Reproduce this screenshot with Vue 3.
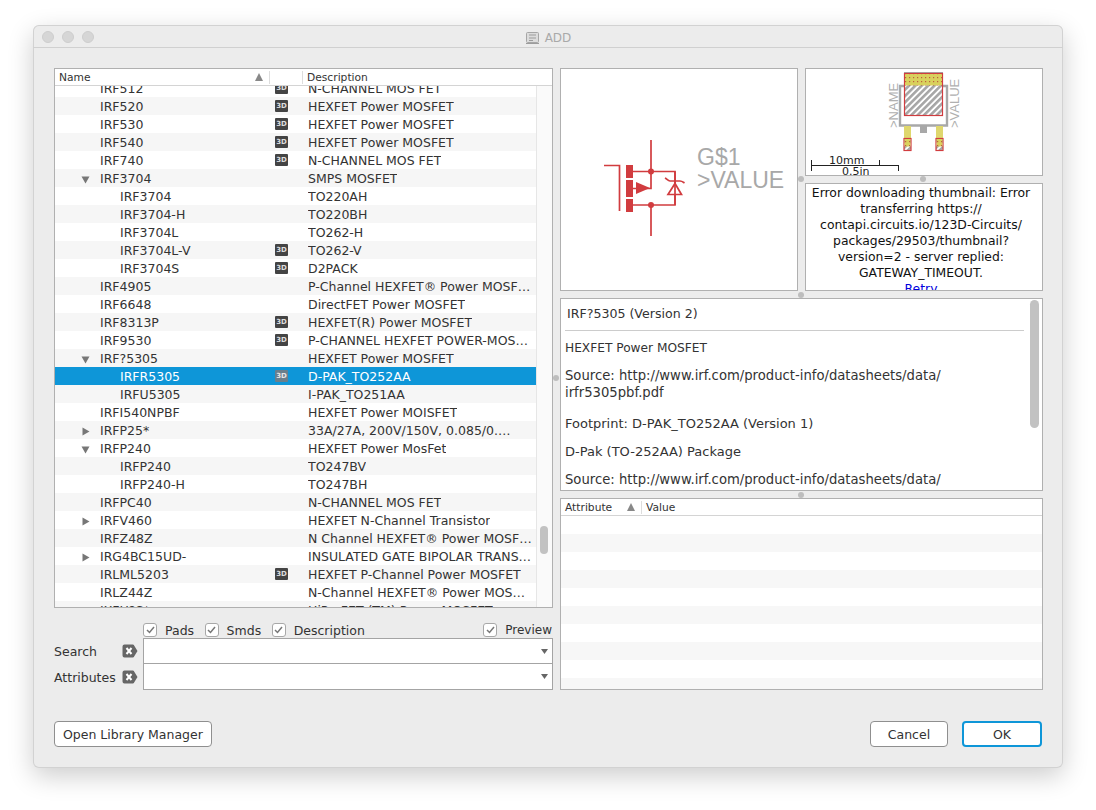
<template>
  <div class="page">
    <div class="window">
      <div class="titlebar">
        <div class="lights"><i></i><i></i><i></i></div>
        <div class="title">
          <svg width="15" height="15" viewBox="0 0 15 15"><rect x="1.500" y="2.500" width="12" height="10" rx="1" fill="#dcdcdc" stroke="#a6a6a6"/><path d="M1 13.500h13M4 5h7M4 8h7M4 10.500h4" stroke="#9c9c9c" fill="none"/></svg>
          <span>ADD</span>
        </div>
      </div>
      <div class="body">
        <div class="main">
          <div class="left">
            <div class="tree panel">
              <div class="thead">
                <div class="th th-name"><span>Name</span><em class="sort"></em></div>
                <div class="th th-3d"></div>
                <div class="th th-desc">Description</div>
              </div>
              <div class="tbody">
                <div class="rows">
                  <div v-for="(r, i) in rows" :key="i" class="row" :class="{ alt: i % 2 === 1, sel: r.sel }">
                    <div class="c-name" :class="'lv' + r.lv">
                      <svg v-if="r.arrow === 'down'" class="arrow" width="9" height="9" viewBox="0 0 9 9"><path d="M0.500 1.500h8l-4 7z" fill="#777"/></svg>
                      <svg v-if="r.arrow === 'right'" class="arrow" width="9" height="9" viewBox="0 0 9 9"><path d="M1.500 0.500v8l7-4z" fill="#777"/></svg>
                      <span>{{ r.n }}</span>
                    </div>
                    <div class="c-3d"><b v-if="r.d3" class="badge">3D</b></div>
                    <div class="c-desc">{{ r.d }}</div>
                  </div>
                </div>
                <div class="vbar"><div class="thumb"></div></div>
              </div>
            </div>
            <div class="checks">
              <label v-for="c in checks" :key="c" class="chk" :class="{ push: c === 'Preview' }"><i class="box"><svg width="9" height="8" viewBox="0 0 9 8"><path d="M1 4l2.500 2.500L8 1" fill="none" stroke="#777" stroke-width="1.500"/></svg></i>{{ c }}</label>
            </div>
            <div class="field" v-for="f in ['Search', 'Attributes']" :key="f">
              <span class="flabel">{{ f }}</span>
              <svg class="clear" width="16" height="14" viewBox="0 0 16 14"><path d="M2.500 0.500h8.500a1 1 0 0 1 .8.400l3.700 6.100-3.700 6.100a1 1 0 0 1-.8.400H2.500a2 2 0 0 1-2-2V2.500a2 2 0 0 1 2-2z" fill="#666"/><path d="M4.500 4l5 6M9.500 4l-5 6" stroke="#fff" stroke-width="2"/></svg>
              <div class="combo"><svg width="7" height="5" viewBox="0 0 7 5"><path d="M0 0h7L3.500 5z" fill="#666"/></svg></div>
            </div>
          </div>
          <div class="right">
            <div class="previews">
              <div class="panel symbol">
                <svg class="sym" width="90" height="105" viewBox="600 135 90 105">
                  <g fill="none" stroke="#d13c3f" stroke-width="1.700">
                    <path d="M604 165.500h15.500V211"/>
                    <path d="M651 140v48.500H633"/>
                    <path d="M651 205v31"/>
                    <path d="M633 171.500h42v33.500h-42"/>
                    <path d="M675 171.500v12.500M675 194v11"/>
                    <path d="M668 194.500h13.500L675 183.500z"/>
                    <path d="M665 178c2 1 3 3 5 3h10c2 0 3 1 4.500 2"/>
                  </g>
                  <g fill="#d13c3f">
                    <rect x="626" y="165" width="7" height="13"/>
                    <rect x="626" y="180" width="7" height="17"/>
                    <rect x="626" y="199" width="7" height="13"/>
                    <path d="M636 182l14 6-14 6z"/>
                    <circle cx="651" cy="171.500" r="3"/>
                    <circle cx="651" cy="205" r="3"/>
                  </g>
                </svg>
                <div class="symtext"><div>G$1</div><div>&gt;VALUE</div></div>
              </div>
              <div class="preview-col">
                <div class="panel package">
                  <svg width="236" height="106" viewBox="806 69 236 106">
                    <defs>
                      <pattern id="hatch" width="4.500" height="4.500" patternUnits="userSpaceOnUse" patternTransform="rotate(45)">
                        <rect width="4.500" height="4.500" fill="#fff"/><rect width="2.600" height="4.500" fill="#a6a6a6"/>
                      </pattern>
                      <pattern id="dots" width="4" height="4" patternUnits="userSpaceOnUse">
                        <rect width="4" height="4" fill="#d9d15d"/><rect x="1" y="1" width="1.200" height="1.200" fill="#c0603b"/>
                      </pattern>
                    </defs>
                    <path d="M904 86h-4v39.500h47V86h-4" fill="none" stroke="#a8a8a8" stroke-width="2.400"/>
                    <rect x="920" y="126" width="7" height="7" fill="#a8a8a8"/>
                    <rect x="904" y="126" width="7" height="12" fill="#dfd76d"/>
                    <rect x="936" y="126" width="7" height="12" fill="#dfd76d"/>
                    <rect x="904" y="72" width="39" height="1.500" fill="#a8a8a8"/>
                    <rect x="904.500" y="73.500" width="38" height="42" fill="url(#hatch)" stroke="#d13c3f" stroke-width="1.200"/>
                    <rect x="905" y="74" width="37" height="11.500" fill="url(#dots)"/>
                    <g v-for="x in [904, 936]" :key="x">
                      <rect :x="x" y="138.500" width="7" height="12" fill="url(#hatch)" stroke="#d13c3f" stroke-width="1.200"/>
                      <rect :x="x + 0.6" y="139" width="5.800" height="7.500" fill="url(#dots)"/>
                    </g>
                    <text class="pk-txt" transform="translate(898 128) rotate(-90)">&gt;NAME</text>
                    <text class="pk-txt" transform="translate(959 128) rotate(-90)">&gt;VALUE</text>
                    <path d="M811.500 160v11M811 165.500h88M879.500 160v5M898.500 165v6" fill="none" stroke="#222" stroke-width="1"/>
                    <text class="scale" x="829" y="164">10mm</text>
                    <text class="scale" x="842" y="175">0.5in</text>
                  </svg>
                </div>
                <div class="panel error">
                  <div>Error downloading thumbnail: Error transferring https://<br>contapi.circuits.io/123D-Circuits/<br>packages/29503/thumbnail?<br>version=2 - server replied:<br>GATEWAY_TIMEOUT.</div>
                  <a>Retry</a>
                </div>
              </div>
            </div>
            <div class="panel info">
              <div class="info-text">
                <p class="h">IRF?5305 (Version 2)</p>
                <hr>
                <p class="caps">HEXFET Power MOSFET</p>
                <p class="src gap">Source: http://www.irf.com/product-info/datasheets/data/<br>irfr5305pbf.pdf</p>
                <p>Footprint: D-PAK_TO252AA (Version 1)</p>
                <p>D-Pak (TO-252AA) Package</p>
                <p class="src">Source: http://www.irf.com/product-info/datasheets/data/<br>irfr5305pbf.pdf</p>
              </div>
              <div class="ibar"></div>
            </div>
            <div class="panel attrs">
              <div class="thead thead-a">
                <div class="th a-name"><span>Attribute</span><em class="sort"></em></div>
                <div class="th a-val">Value</div>
              </div>
              <div class="a-rows"><div v-for="n in 10" :key="n" class="a-row" :class="{ alt: n % 2 === 0 }"></div></div>
            </div>
          </div>
          <i class="handle h1"></i><i class="handle h2"></i><i class="handle h3"></i><i class="handle h4"></i><i class="handle h5"></i>
        </div>
        <div class="footer">
          <button class="btn">Open Library Manager</button>
          <div class="spacer"></div>
          <button class="btn cancel">Cancel</button>
          <button class="btn ok">OK</button>
        </div>
      </div>
    </div>
  </div>
</template>

<script setup>
const s = 'HEXFET Power MOSFET'
const n = 'N-CHANNEL MOS FET'
const checks = ['Pads', 'Smds', 'Description', 'Preview']
const rows = [
  { n: 'IRF512', lv: 1, d3: 1, d: n },
  { n: 'IRF520', lv: 1, d3: 1, d: s },
  { n: 'IRF530', lv: 1, d3: 1, d: s },
  { n: 'IRF540', lv: 1, d3: 1, d: s },
  { n: 'IRF740', lv: 1, d3: 1, d: n },
  { n: 'IRF3704', lv: 1, arrow: 'down', d: 'SMPS MOSFET' },
  { n: 'IRF3704', lv: 2, d: 'TO220AH' },
  { n: 'IRF3704-H', lv: 2, d: 'TO220BH' },
  { n: 'IRF3704L', lv: 2, d: 'TO262-H' },
  { n: 'IRF3704L-V', lv: 2, d3: 1, d: 'TO262-V' },
  { n: 'IRF3704S', lv: 2, d3: 1, d: 'D2PACK' },
  { n: 'IRF4905', lv: 1, d: 'P-Channel HEXFET® Power MOSF…' },
  { n: 'IRF6648', lv: 1, d: 'DirectFET Power MOSFET' },
  { n: 'IRF8313P', lv: 1, d3: 1, d: 'HEXFET(R) Power MOSFET' },
  { n: 'IRF9530', lv: 1, d3: 1, d: 'P-CHANNEL HEXFET POWER-MOS…' },
  { n: 'IRF?5305', lv: 1, arrow: 'down', d: s },
  { n: 'IRFR5305', lv: 2, d3: 1, d: 'D-PAK_TO252AA', sel: true },
  { n: 'IRFU5305', lv: 2, d: 'I-PAK_TO251AA' },
  { n: 'IRFI540NPBF', lv: 1, d: 'HEXFET Power MOISFET' },
  { n: 'IRFP25*', lv: 1, arrow: 'right', d: '33A/27A, 200V/150V, 0.085/0.…' },
  { n: 'IRFP240', lv: 1, arrow: 'down', d: 'HEXFET Power MosFet' },
  { n: 'IRFP240', lv: 2, d: 'TO247BV' },
  { n: 'IRFP240-H', lv: 2, d: 'TO247BH' },
  { n: 'IRFPC40', lv: 1, d: n },
  { n: 'IRFV460', lv: 1, arrow: 'right', d: 'HEXFET N-Channel Transistor' },
  { n: 'IRFZ48Z', lv: 1, d: 'N Channel HEXFET® Power MOSF…' },
  { n: 'IRG4BC15UD-', lv: 1, arrow: 'right', d: 'INSULATED GATE BIPOLAR TRANS…' },
  { n: 'IRLML5203', lv: 1, d3: 1, d: 'HEXFET P-Channel Power MOSFET' },
  { n: 'IRLZ44Z', lv: 1, d: 'N-Channel HEXFET® Power MOS…' },
  { n: 'IXFH?S*', lv: 1, arrow: 'right', d: 'HiPerFET (TM) Power MOSFET' }
]
</script>

<style>
html, body { margin: 0; background: #fff; }
</style>
<style scoped>
.page { width: 1096px; height: 810px; padding: 25px 33px 42px; box-sizing: border-box; background: #fff; overflow: hidden; font-family: "DejaVu Sans", sans-serif; font-size: 12.500px; color: #333; }
.window { height: 743px; background: #ececec; border-radius: 6px; box-shadow: inset 0 0 0 1px #d2d2d2, 0 8px 26px rgba(0,0,0,.2); display: flex; flex-direction: column; overflow: hidden; }
.titlebar { height: 22px; flex: none; position: relative; display: flex; align-items: center; justify-content: center; border-bottom: 1px solid #d0d0d0; }
.lights { position: absolute; left: 9px; top: 6px; display: flex; gap: 8px; }
.lights i { width: 12px; height: 12px; border-radius: 50%; background: #d6d6d6; border: 1px solid #cdcdcd; box-sizing: border-box; }
.title { display: flex; align-items: center; gap: 5px; color: #a9a9a9; font-size: 12px; margin-top: 3px; }
.body { flex: 1; padding: 20px 21px 21px; display: flex; flex-direction: column; }
.main { position: relative; display: flex; gap: 7px; height: 622px; }
.left { width: 499px; flex: none; display: flex; flex-direction: column; }
.right { flex: 1; display: flex; flex-direction: column; gap: 7px; }
.panel { background: #fff; border: 1px solid #b0b0b0; box-sizing: border-box; }
.tree { height: 540px; flex: none; display: flex; flex-direction: column; overflow: hidden; }
.thead { height: 16px; flex: none; display: flex; align-items: center; border-bottom: 1px solid #d4d4d4; font-size: 10.700px; color: #333; background: #fff; box-sizing: content-box; }
.th { height: 13px; display: flex; align-items: center; box-sizing: border-box; }
.th-name { width: 215px; padding-left: 4px; justify-content: space-between; padding-right: 4px; border-right: 1px solid #ddd; }
.th-3d { width: 33px; border-right: 1px solid #ddd; }
.th-desc { padding-left: 4px; }
.sort { width: 0; height: 0; border-left: 4.500px solid transparent; border-right: 4.500px solid transparent; border-bottom: 8px solid #888; margin-right: 2px; }
.tbody { flex: 1; display: flex; min-height: 0; }
.rows { flex: 1; overflow: hidden; }
.row { height: 18px; display: flex; align-items: center; color: #333; }
.row:first-child { margin-top: -7px; }
.row.alt { background: #f6f6f6; }
.row.sel { background: #0e96d8; color: #fff; }
.c-name { width: 220px; flex: none; display: flex; align-items: center; position: relative; box-sizing: border-box; }
.lv1 { padding-left: 45px; }
.lv2 { padding-left: 65px; }
.arrow { position: absolute; left: 26px; top: 4px; }
.c-3d { width: 33px; flex: none; display: flex; }
.badge { width: 13px; height: 12px; background: #444; color: #ddd; font: bold 7px/12px "DejaVu Sans", sans-serif; text-align: center; border-radius: 1px; }
.sel .badge { background: #6a7f8c; color: #e6e6e6; }
.c-desc { white-space: nowrap; overflow: hidden; }
.vbar { width: 16px; flex: none; background: #fafafa; border-left: 1px solid #e6e6e6; position: relative; box-sizing: border-box; }
.thumb { position: absolute; left: 3px; top: 440px; width: 8px; height: 28px; border-radius: 4px; background: #c2c2c2; }
.checks { display: flex; align-items: center; height: 16px; margin-top: 14px; padding: 0 1px 0 89px; gap: 10.500px; }
.chk { display: flex; align-items: center; gap: 8px; color: #333; }
.chk.push { margin-left: auto; font-size: 12px; }
.box { width: 14px; height: 14px; background: #fff; border: 1px solid #a8a8a8; border-radius: 3px; display: flex; align-items: center; justify-content: center; box-sizing: border-box; }
.field { display: flex; align-items: center; height: 26px; position: relative; }
.flabel { width: 68px; flex: none; color: #333; padding-top: 1px; box-sizing: border-box; }
.clear { flex: none; width: 16px; margin-right: 5px; }
.combo { flex: 1; height: 100%; box-sizing: border-box; background: #fff; border: 1px solid #a4a4a4; display: flex; align-items: center; justify-content: flex-end; padding-right: 4px; }
.field + .field .combo { border-top: 0; }
.previews { display: flex; gap: 7px; height: 223px; }
.symbol { width: 238px; flex: none; display: flex; align-items: flex-start; padding: 66px 0 0 39px; }
.sym { flex: none; display: block; }
.symtext { color: #a8a8a8; font: 23px/23px "Liberation Sans", sans-serif; margin: 11px 0 0 7px; }
.preview-col { flex: 1; display: flex; flex-direction: column; gap: 7px; }
.package { height: 108px; }
.package svg { display: block; }
.pk-txt { font: 13px "Liberation Sans", sans-serif; fill: #b0b0b0; }
.scale { font: 11px "DejaVu Sans", sans-serif; fill: #222; }
.error { height: 108px; overflow: hidden; padding: 1px 8px 1px 2px; text-align: center; font-size: 12.400px; line-height: 16px; color: #111; }
.error a { color: #00d; text-decoration: underline; display: block; }
.info { height: 193px; display: flex; overflow: hidden; position: relative; }
.info-text { flex: 1; min-width: 0; padding: 6px 6px 0 4px; overflow: hidden; color: #333; line-height: 17px; font-size: 13px; white-space: nowrap; }
.info-text p { margin: 0 0 11px; }
.info-text .h { margin: 0 0 8px 2px; font-size: 12.600px; }
.info-text .caps { font-size: 12.200px; margin-bottom: 10px; }
.info-text .src { font-size: 13.200px; }
.info-text .gap { margin-bottom: 14.500px; }
.info-text hr { border: 0; border-top: 1px solid #ccc; margin: 0 0 8.500px; }
.ibar { width: 12px; flex: none; position: relative; }
.ibar::before { content: ""; position: absolute; left: 0; top: 1px; width: 9px; height: 128px; border-radius: 4.500px; background: #c2c2c2; }
.attrs { height: 192px; overflow: hidden; }
.a-name { width: 81px; padding: 0 4px; justify-content: space-between; border-right: 1px solid #ddd; box-sizing: border-box; }
.a-val { padding-left: 4px; }
.a-row { height: 18px; }
.a-row.alt { background: #f7f7f7; }
.handle { position: absolute; width: 6px; height: 6px; border-radius: 50%; background: #bdbdbd; }
.h1 { left: 499px; top: 307px; }
.h2 { left: 744px; top: 108px; }
.h3 { left: 866px; top: 108px; }
.h4 { left: 744px; top: 224px; }
.h5 { left: 744px; top: 424px; }
.footer { display: flex; align-items: center; height: 26px; margin-top: 31px; }
.spacer { flex: 1; }
.btn { height: 26px; background: #fff; border: 1px solid #8f8f8f; border-radius: 4px; font: 12.500px "DejaVu Sans", sans-serif; color: #333; padding: 1px 8px 0; }
.cancel { width: 78px; margin-right: 14px; }
.ok { width: 80px; border: 2px solid #0e96d8; }
</style>
